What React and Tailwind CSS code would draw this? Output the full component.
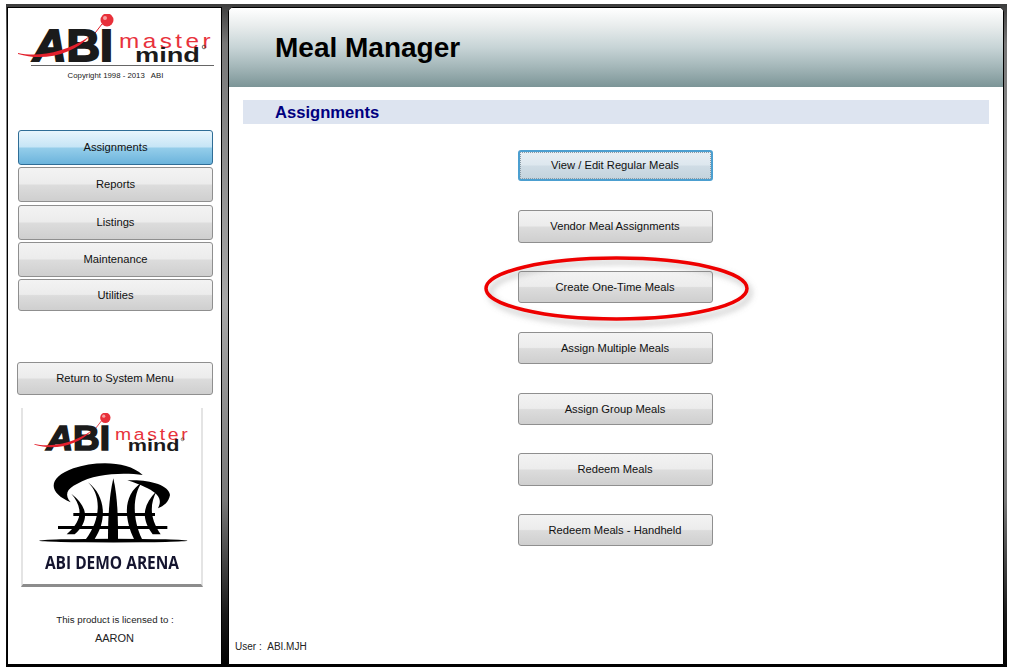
const FONT = { fontFamily: '"Liberation Sans", Arial, sans-serif' };

function LogoMark() {
  return (
    <>
      <path d="M92 37 L102 24" stroke="#e0202a" strokeWidth="1" fill="none" />
      <circle cx="107" cy="20" r="6.5" fill="#e8303a" />
      <circle cx="105" cy="18" r="2" fill="#f6a0a0" />
      <text x="33" y="61" fontFamily="Liberation Sans" fontWeight="700" fontSize="44" textLength="80" lengthAdjust="spacingAndGlyphs" fill="#1b1b1b" stroke="#1b1b1b" strokeWidth="2"><tspan fontStyle="italic">A</tspan>BI</text>
      <path d="M18 53 C36 57 64 54 90 36 C74 54 44 62 18 54 Z" fill="#e3202c" />
      <text x="119" y="48" fontFamily="Liberation Sans" fontSize="21" letterSpacing="3" textLength="95" lengthAdjust="spacingAndGlyphs" fill="#e8323c">master</text>
      <text x="135" y="62" fontFamily="Liberation Sans" fontSize="21" fontWeight="700" textLength="65" lengthAdjust="spacingAndGlyphs" fill="#1b1b1b">mind</text>
      <circle cx="204" cy="47" r="1.8" fill="none" stroke="#333" strokeWidth="0.7" />
    </>
  );
}

function TopLogo() {
  return (
    <svg width="196" height="54" viewBox="18 14 196 54" className="block ml-[10px]">
      <LogoMark />
      <rect x="31" y="65" width="183" height="1" fill="#666" />
    </svg>
  );
}

function Arena() {
  return (
    <svg width="165" height="94" viewBox="0 0 495 282" className="block">
      <g fill="#000">
        <path d="M122 142 C58 115 48 70 130 40 C195 18 292 16 338 60 C285 52 195 54 142 86 C108 102 104 120 122 142 Z" />
        <path d="M292 76 C350 72 418 88 420 120 C416 142 402 152 384 160 C404 125 372 102 292 76 Z" />
        <path d="M250 70 C236 130 234 200 234 252 L264 252 C264 200 264 130 250 70 Z" />
        <path d="M174 82 C214 120 214 190 168 252 L194 252 C234 190 224 120 174 82 Z" />
        <path d="M336 82 C278 120 282 190 312 252 L336 252 C306 190 308 120 336 82 Z" />
        <path d="M124 116 C152 150 166 190 110 238 L134 238 C186 190 166 150 124 116 Z" />
        <path d="M380 108 C338 150 332 190 368 238 L392 238 C360 190 358 150 380 108 Z" />
        <rect x="130" y="174" width="245" height="9" />
        <rect x="84" y="213" width="328" height="9" />
        <ellipse cx="250" cy="257" rx="222" ry="5.5" />
      </g>
    </svg>
  );
}

function ArenaCard() {
  return (
    <div className="mt-[13px] ml-[13px] w-[182px] h-[179px] flex flex-col items-center bg-white border-x-2 border-x-[#e4e4e4] border-b-[3px] border-b-[#8c8c8c]">
      <svg width="157" height="43" viewBox="0 0 196 54" className="block mt-[5px]">
        <g transform="translate(-18 -14)"><LogoMark /></g>
      </svg>
      <div className="mt-[-1px]"><Arena /></div>
      <div className="mt-[3px] text-[18px] leading-[20px] font-bold text-[#14142e] whitespace-nowrap scale-x-[0.86]" style={{ fontFamily: '"Open Sans", sans-serif' }}>ABI DEMO ARENA</div>
    </div>
  );
}

const BASE = "w-[195px] flex items-center justify-center rounded-[3px] text-[11.2px] text-[#111]";
const GRAY = "border border-[#8f8f8f] bg-[linear-gradient(to_bottom,#f3f3f3_0%,#ececec_48%,#dcdcdc_52%,#cfcfcf_100%)]";

function Btn({ label, className }) {
  return <div className={`${BASE} ${className}`}>{label}</div>;
}

const mainButtons = [
  { label: "View / Edit Regular Meals", cls: "mt-[26px] h-[31px] border-2 border-[#4c9fd0] bg-[linear-gradient(to_bottom,#e8eff4_0%,#dde7ee_48%,#cfdce5_52%,#c4d3dd_100%)] outline-1 outline-dotted outline-offset-[-3px] outline-[#8a9aa5]" },
  { label: "Vendor Meal Assignments", cls: `mt-[29px] h-[33px] ${GRAY}` },
  { label: "Create One-Time Meals", cls: `mt-[28px] h-[32px] ${GRAY}` },
  { label: "Assign Multiple Meals", cls: `mt-[29px] h-[32px] ${GRAY}` },
  { label: "Assign Group Meals", cls: `mt-[29px] h-[32px] ${GRAY}` },
  { label: "Redeem Meals", cls: `mt-[28px] h-[33px] ${GRAY}` },
  { label: "Redeem Meals - Handheld", cls: `mt-[28px] h-[32px] ${GRAY}` },
];

export default function App() {
  return (
    <div className="w-[1010px] h-[671px] bg-white overflow-hidden pt-[4px] pl-[6px]" style={FONT}>
      <div className="w-[1001px] h-[663px] flex gap-[6px] pt-[3px] pb-[2px] pl-px pr-[3px] bg-[linear-gradient(to_bottom,#3d3d3d_0%,#777_6%,#a8a8a8_45%,#777_75%,#1a1a1a_92%,#000_100%)]">
        <div className="w-[215px] h-full flex flex-col bg-white border border-black">
          <div className="mt-[6px]"><TopLogo /></div>
          <div className="mt-[3px] text-center text-[7.8px] leading-[10px] text-[#222] pl-[2px]">Copyright 1998 - 2013 &nbsp; ABI</div>
          <div className="mt-[49px] ml-[10px] flex flex-col">
            <Btn label="Assignments" className="h-[35px] border border-[#2f6d96] bg-[linear-gradient(to_bottom,#e8f5fc_0%,#c6e5f6_48%,#94cdea_52%,#6cb4dc_100%)]" />
            <Btn label="Reports" className={`h-[35px] mt-[2px] ${GRAY}`} />
            <Btn label="Listings" className={`h-[35px] mt-[3px] ${GRAY}`} />
            <Btn label="Maintenance" className={`h-[35px] mt-[2px] ${GRAY}`} />
            <Btn label="Utilities" className={`h-[32px] mt-[2px] ${GRAY}`} />
          </div>
          <div className="mt-[51px] ml-[9px]">
            <div className={`w-[196px] h-[33px] flex items-center justify-center rounded-[3px] text-[11.2px] text-[#111] ${GRAY}`}>Return to System Menu</div>
          </div>
          <ArenaCard />
          <div className="mt-[27px] text-center text-[9.7px] leading-[12px] text-[#222] pl-[1px]">This product is licensed to :</div>
          <div className="mt-[6px] text-center text-[11px] leading-[13px] text-[#222]">AARON</div>
        </div>
        <div className="relative flex-1 h-full flex flex-col bg-white border border-black rounded-t-[5px] overflow-hidden">
          <div className="h-[79px] flex items-center pl-[46px] bg-[linear-gradient(to_bottom,#ffffff_0%,#e9eded_22%,#c7d4d6_50%,#a3b6b8_75%,#7c9597_100%)]">
            <h1 className="text-[28px] font-bold text-black leading-none">Meal Manager</h1>
          </div>
          <div className="mt-[13px] mx-[14px] h-[24px] flex items-center pl-[32px] pt-[2px] bg-[#dde4f0] text-[16.6px] font-bold text-[#000080]">Assignments</div>
          <div className="flex flex-col items-center pr-[2px]">
            {mainButtons.map((b) => <Btn key={b.label} label={b.label} className={b.cls} />)}
          </div>
          <div className="mt-auto mb-[11px] pl-[6px] text-[10px] leading-[12px] text-[#222]">User : &nbsp;ABI.MJH</div>
          <svg className="absolute left-[249px] top-[244px] pointer-events-none" width="290" height="90" viewBox="0 0 290 90">
            <defs>
              <filter id="sh" x="-10%" y="-30%" width="120%" height="170%">
                <feGaussianBlur stdDeviation="3" />
              </filter>
            </defs>
            <ellipse cx="142" cy="41" rx="130" ry="31" fill="none" stroke="#777" strokeOpacity="0.55" strokeWidth="3" filter="url(#sh)" />
            <ellipse cx="138.5" cy="36.5" rx="130.5" ry="30.5" fill="none" stroke="#ee0000" strokeWidth="3.5" />
          </svg>
        </div>
      </div>
    </div>
  );
}
